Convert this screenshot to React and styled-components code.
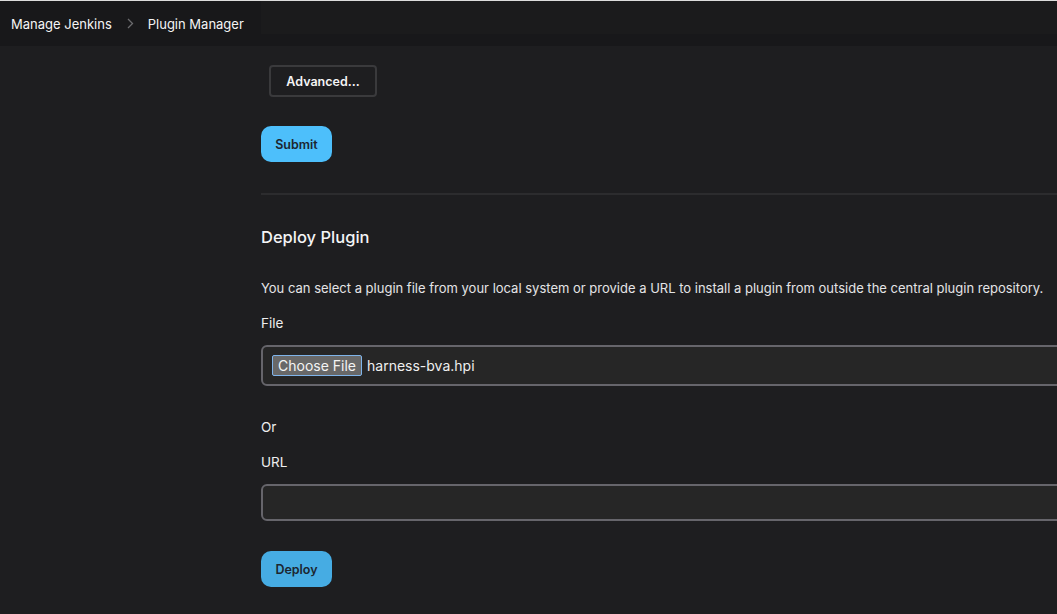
import React from "react";
import styled, { createGlobalStyle } from "styled-components";

const GlobalStyle = createGlobalStyle`
  html, body {
    margin: 0;
    padding: 0;
    background: #1e1e20;
    overflow: hidden;
  }
  body {
    font-family: Inter, "Noto Sans", "Liberation Sans", sans-serif;
    color: #f2f2f3;
    -webkit-font-smoothing: antialiased;
  }
`;

const Page = styled.div`
  width: 1057px;
  height: 614px;
  border-top: 1px solid #dcdcdc;
  box-sizing: border-box;
  overflow: hidden;
`;

const Header = styled.header`
  display: flex;
  height: 45px;
  background: #18181a;
`;

const Crumbs = styled.nav`
  width: 261px;
  flex: none;
  display: flex;
  align-items: center;
  padding: 0 0 0 11px;
  box-sizing: border-box;
  font-size: 13px;
  height: 45px;
`;

const Crumb = styled.a`
  color: #f4f4f5;
  text-decoration: none;
`;

const Chevron = styled.svg`
  margin: 0 14px 0 15px;
`;

const HeaderFill = styled.div`
  flex: 1;
  height: 33px;
  background: #1b1b1c;
`;

const Layout = styled.div`
  display: grid;
  grid-template-columns: 261px 1fr;
`;

const Main = styled.main`
  display: flex;
  flex-direction: column;
  align-items: flex-start;
  padding-top: 19px;
  min-width: 860px;
`;

const Button = styled.button`
  font-family: inherit;
  font-weight: 600;
  font-size: 12.5px;
  border-radius: ${(p) => (p.outline ? "4px" : "10px")};
  border: ${(p) => (p.outline ? "2px solid #3a3a3c" : "none")};
  background: ${(p) => (p.outline ? "transparent" : p.bg)};
  color: ${(p) => (p.outline ? "#f4f4f5" : "#1c2630")};
  height: ${(p) => (p.outline ? "32px" : "36px")};
  width: ${(p) => (p.outline ? "108px" : "71px")};
  margin-left: ${(p) => (p.outline ? "8px" : "0")};
  padding: 0;
  cursor: pointer;
`;

const Gap = styled.div`
  height: ${(p) => p.h}px;
`;

const Divider = styled.hr`
  align-self: stretch;
  border: none;
  height: 2px;
  background: #2c2c2e;
  margin: 0;
`;

const Heading = styled.h2`
  font-size: 16.5px;
  font-weight: 500;
  margin: 0;
  line-height: 20px;
  color: #f4f4f5;
`;

const Text = styled.p`
  font-size: 13px;
  margin: 0;
  line-height: 18px;
  color: #e4e4e6;
  white-space: nowrap;
`;

const Label = styled.div`
  font-size: 13.5px;
  font-weight: 400;
  line-height: 18px;
  color: #eeeeef;
`;

const Field = styled.div`
  align-self: stretch;
  height: ${(p) => p.h || 41}px;
  box-sizing: border-box;
  border: 2px solid #66656b;
  border-radius: 6px;
  background: #262626;
  display: flex;
  align-items: center;
  padding-left: 9px;
  gap: 5px;
`;

const FileButton = styled.span`
  background: #686868;
  border: 1px solid #7fb4ea;
  border-radius: 2px;
  color: #f4f4f4;
  font-size: 14px;
  height: 21px;
  width: 90px;
  box-sizing: border-box;
  display: flex;
  align-items: center;
  justify-content: center;
`;

const FileName = styled.span`
  font-size: 14px;
  color: #efefef;
`;

export default function App() {
  return (
    <>
      <GlobalStyle />
      <Page>
        <Header>
          <Crumbs>
            <Crumb href="#">Manage Jenkins</Crumb>
            <Chevron width="7" height="11" viewBox="0 0 7 11" fill="none">
              <path d="M1 1l4.5 4.5L1 10" stroke="#6b6b6e" strokeWidth="1.3" />
            </Chevron>
            <Crumb href="#">Plugin Manager</Crumb>
          </Crumbs>
          <HeaderFill />
        </Header>
        <Layout>
          <div />
          <Main>
            <Button outline>Advanced...</Button>
            <Gap h={29} />
            <Button bg="#4dbffb">Submit</Button>
            <Gap h={31} />
            <Divider />
            <Gap h={32} />
            <Heading>Deploy Plugin</Heading>
            <Gap h={32} />
            <Text>
              You can select a plugin file from your local system or provide a URL to install a plugin from outside the central plugin repository.
            </Text>
            <Gap h={17} />
            <Label>File</Label>
            <Gap h={13} />
            <Field>
              <FileButton>Choose File</FileButton>
              <FileName>harness-bva.hpi</FileName>
            </Field>
            <Gap h={32} />
            <Label>Or</Label>
            <Gap h={17} />
            <Label>URL</Label>
            <Gap h={13} />
            <Field h={37} />
            <Gap h={30} />
            <Button bg="#46ace3">Deploy</Button>
          </Main>
        </Layout>
      </Page>
    </>
  );
}
